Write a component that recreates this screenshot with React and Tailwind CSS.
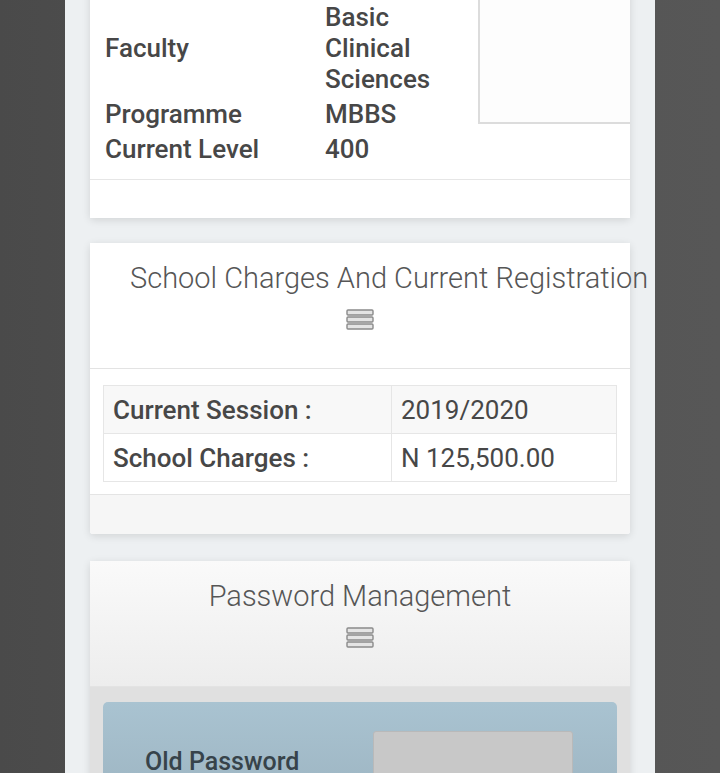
import React from "react";

const PROFILE = [
  { label: "Faculty", value: ["Basic", "Clinical", "Sciences"] },
  { label: "Programme", value: ["MBBS"] },
  { label: "Current Level", value: ["400"] },
];

const CHARGES = [
  { label: "Current Session :", value: "2019/2020" },
  { label: "School Charges :", value: "N 125,500.00" },
];

// stacked outline bars shown under each panel title
function BarsIcon() {
  return (
    <svg width="28" height="22" viewBox="0 0 28 22" className="mx-auto">
      {[1, 8, 15].map((y) => (
        <rect key={y} x="1" y={y} width="26" height="5" rx="1" fill="#e4e4e4" stroke="#8a8a8a" strokeWidth="1.4" />
      ))}
    </svg>
  );
}

function PanelHeading({ title, tone = "bg-white" }) {
  return (
    <div className={`${tone} border-b border-[#e3e3e3] px-[40px] pt-[16px] pb-[37px] text-center`}>
      <h3 className="whitespace-nowrap text-[29px] font-light leading-[38px] text-[#565656]">{title}</h3>
      <div className="mt-[12px]">
        <BarsIcon />
      </div>
    </div>
  );
}

export default function App() {
  return (
    <div className="flex h-[773px] w-full justify-center overflow-hidden bg-gradient-to-r from-[#4a4a4a] via-[#525252] to-[#575757] font-['Roboto',sans-serif]">
      <div className="w-[590px] shrink-0 bg-[#edf0f2] px-[25px]">
        {/* profile card */}
        <div className="-mt-[40px] rounded-[3px] bg-white shadow-[0_2px_8px_rgba(0,0,0,0.12)]">
          <div className="flex">
            <table className="ml-[15px] mt-[42px] h-fit w-[373px] text-[26px] font-medium leading-[31px] text-[#474747]">
              <tbody>
                {PROFILE.map((row) => (
                  <tr key={row.label}>
                    <td className="w-[220px] pb-[4px] align-middle">{row.label}</td>
                    <td className="pb-[4px]">
                      {row.value.map((line) => (
                        <div key={line}>{line}</div>
                      ))}
                    </td>
                  </tr>
                ))}
              </tbody>
            </table>
            <div className="ml-auto h-[164px] w-[152px] border-b-2 border-l-2 border-[#dcdcdc] bg-[#fdfdfd]" />
          </div>
          <div className="mt-[10px] h-[39px] border-t border-[#e6e6e6] bg-white" />
        </div>

        {/* charges card */}
        <div className="mt-[25px] rounded-[3px] bg-white shadow-[0_2px_8px_rgba(0,0,0,0.12)]">
          <PanelHeading title="School Charges And Current Registration" />
          <div className="px-[13px] pb-[12px] pt-[16px]">
            <table className="w-full border border-[#e2e2e2] text-[26px] leading-[30px] text-[#474747]">
              <tbody>
                {CHARGES.map((row, i) => (
                  <tr key={row.label} className={i === 0 ? "bg-[#f8f8f8]" : "bg-white"}>
                    <td className="h-[48px] w-[288px] border border-[#e6e6e6] pl-[9px] font-medium">{row.label}</td>
                    <td className="border border-[#e6e6e6] pl-[9px]">{row.value}</td>
                  </tr>
                ))}
              </tbody>
            </table>
          </div>
          <div className="h-[40px] rounded-b-[3px] border-t border-[#e4e4e4] bg-[#f6f6f6]" />
        </div>

        {/* password card */}
        <div className="mt-[27px] rounded-t-[3px] bg-[#e4e4e4] shadow-[0_2px_8px_rgba(0,0,0,0.12)]">
          <PanelHeading title="Password Management" tone="bg-gradient-to-b from-[#fafafa] to-[#ededed]" />
          <div className="bg-[#e0e0e0] px-[13px] pt-[15px]">
            <div className="h-[120px] rounded-t-[5px] bg-gradient-to-b from-[#a9c3d1] to-[#9bb2bf] px-[42px] pt-[29px]">
              <div className="flex items-start">
                <span className="mt-[16px] w-[228px] text-[25px] font-medium leading-[30px] text-[#37434a]">Old Password</span>
                <div className="h-[60px] w-[200px] rounded-[3px] border border-[#b9b9b9] bg-[#c8c8c8]" />
              </div>
            </div>
          </div>
        </div>
      </div>
    </div>
  );
}
